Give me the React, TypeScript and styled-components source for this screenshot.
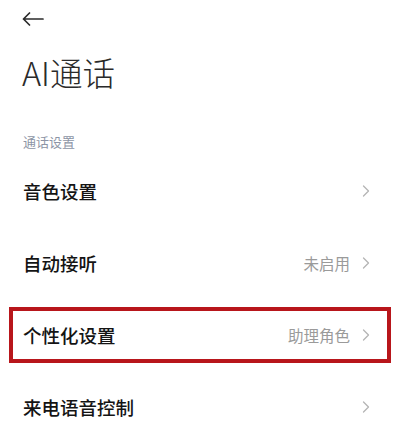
import styled, { createGlobalStyle } from 'styled-components';

const GlobalStyle = createGlobalStyle`
    html, body {
        margin: 0;
        padding: 0;
        background: #ffffff;
    }
    body {
        font-family: "Noto Sans CJK SC", "Noto Sans", sans-serif;
        color: #1a1a1a;
    }
`

type Item = {
    label: string;
    value?: string;
    highlight?: boolean;
}

const items: Item[] = [
    { label: '音色设置' },
    { label: '自动接听', value: '未启用' },
    { label: '个性化设置', value: '助理角色', highlight: true },
    { label: '来电语音控制' },
]

const BackArrow = () => (
    <svg width="22" height="14" viewBox="0 0 22 14" fill="none">
        <path d="M21 7H1.5M7.5 1L1.5 7L7.5 13" stroke="#2b2b2b" strokeWidth="1.7" strokeLinecap="round" strokeLinejoin="round" />
    </svg>
)

const Chevron = () => (
    <svg width="8" height="12" viewBox="0 0 8 12" fill="none">
        <path d="M1.5 1L6.5 6L1.5 11" stroke="#b5b5b5" strokeWidth="1.3" strokeLinecap="round" strokeLinejoin="round" />
    </svg>
)

export default function App() {
    return (
        <>
            <GlobalStyle />
            <Page>
                <Header>
                    <BackArrow />
                </Header>
                <Title>AI通话</Title>
                <SectionLabel>通话设置</SectionLabel>
                <List>
                    {items.map((item) => (
                        <Row key={item.label}>
                            <RowLabel>{item.label}</RowLabel>
                            <RowRight>
                                {item.value && <RowValue>{item.value}</RowValue>}
                                <Chevron />
                            </RowRight>
                            {item.highlight && <Highlight />}
                        </Row>
                    ))}
                </List>
            </Page>
        </>
    )
}

const Page = styled.div`
    width: 400px;
    height: 441px;
    overflow: hidden;
    box-sizing: border-box;
    padding: 0 30px 0 23px;
`

const Header = styled.div`
    height: 38px;
    display: flex;
    align-items: center;
    margin-left: -1px;
`

const Title = styled.div`
    margin-top: 14px;
    margin-left: -1px;
    font-size: 32.5px;
    line-height: 40px;
    font-weight: 300;
    color: #2a2a2a;
`

const SectionLabel = styled.div`
    margin-top: 40px;
    font-size: 13px;
    line-height: 20px;
    color: #8d95a6;
`

const List = styled.div`
    display: flex;
    flex-direction: column;
    margin-top: 3px;
`

const Row = styled.div`
    position: relative;
    height: 72px;
    display: flex;
    align-items: center;
    justify-content: space-between;
`

const RowLabel = styled.div`
    font-size: 18.5px;
    font-weight: 500;
    color: #141414;
`

const RowRight = styled.div`
    display: flex;
    align-items: center;
    gap: 12px;
`

const RowValue = styled.div`
    font-size: 15.5px;
    color: #9a9a9a;
`

const Highlight = styled.div`
    position: absolute;
    left: -14px;
    right: -21px;
    top: 8px;
    bottom: 8px;
    border: 4.5px solid #b8161b;
    pointer-events: none;
`
